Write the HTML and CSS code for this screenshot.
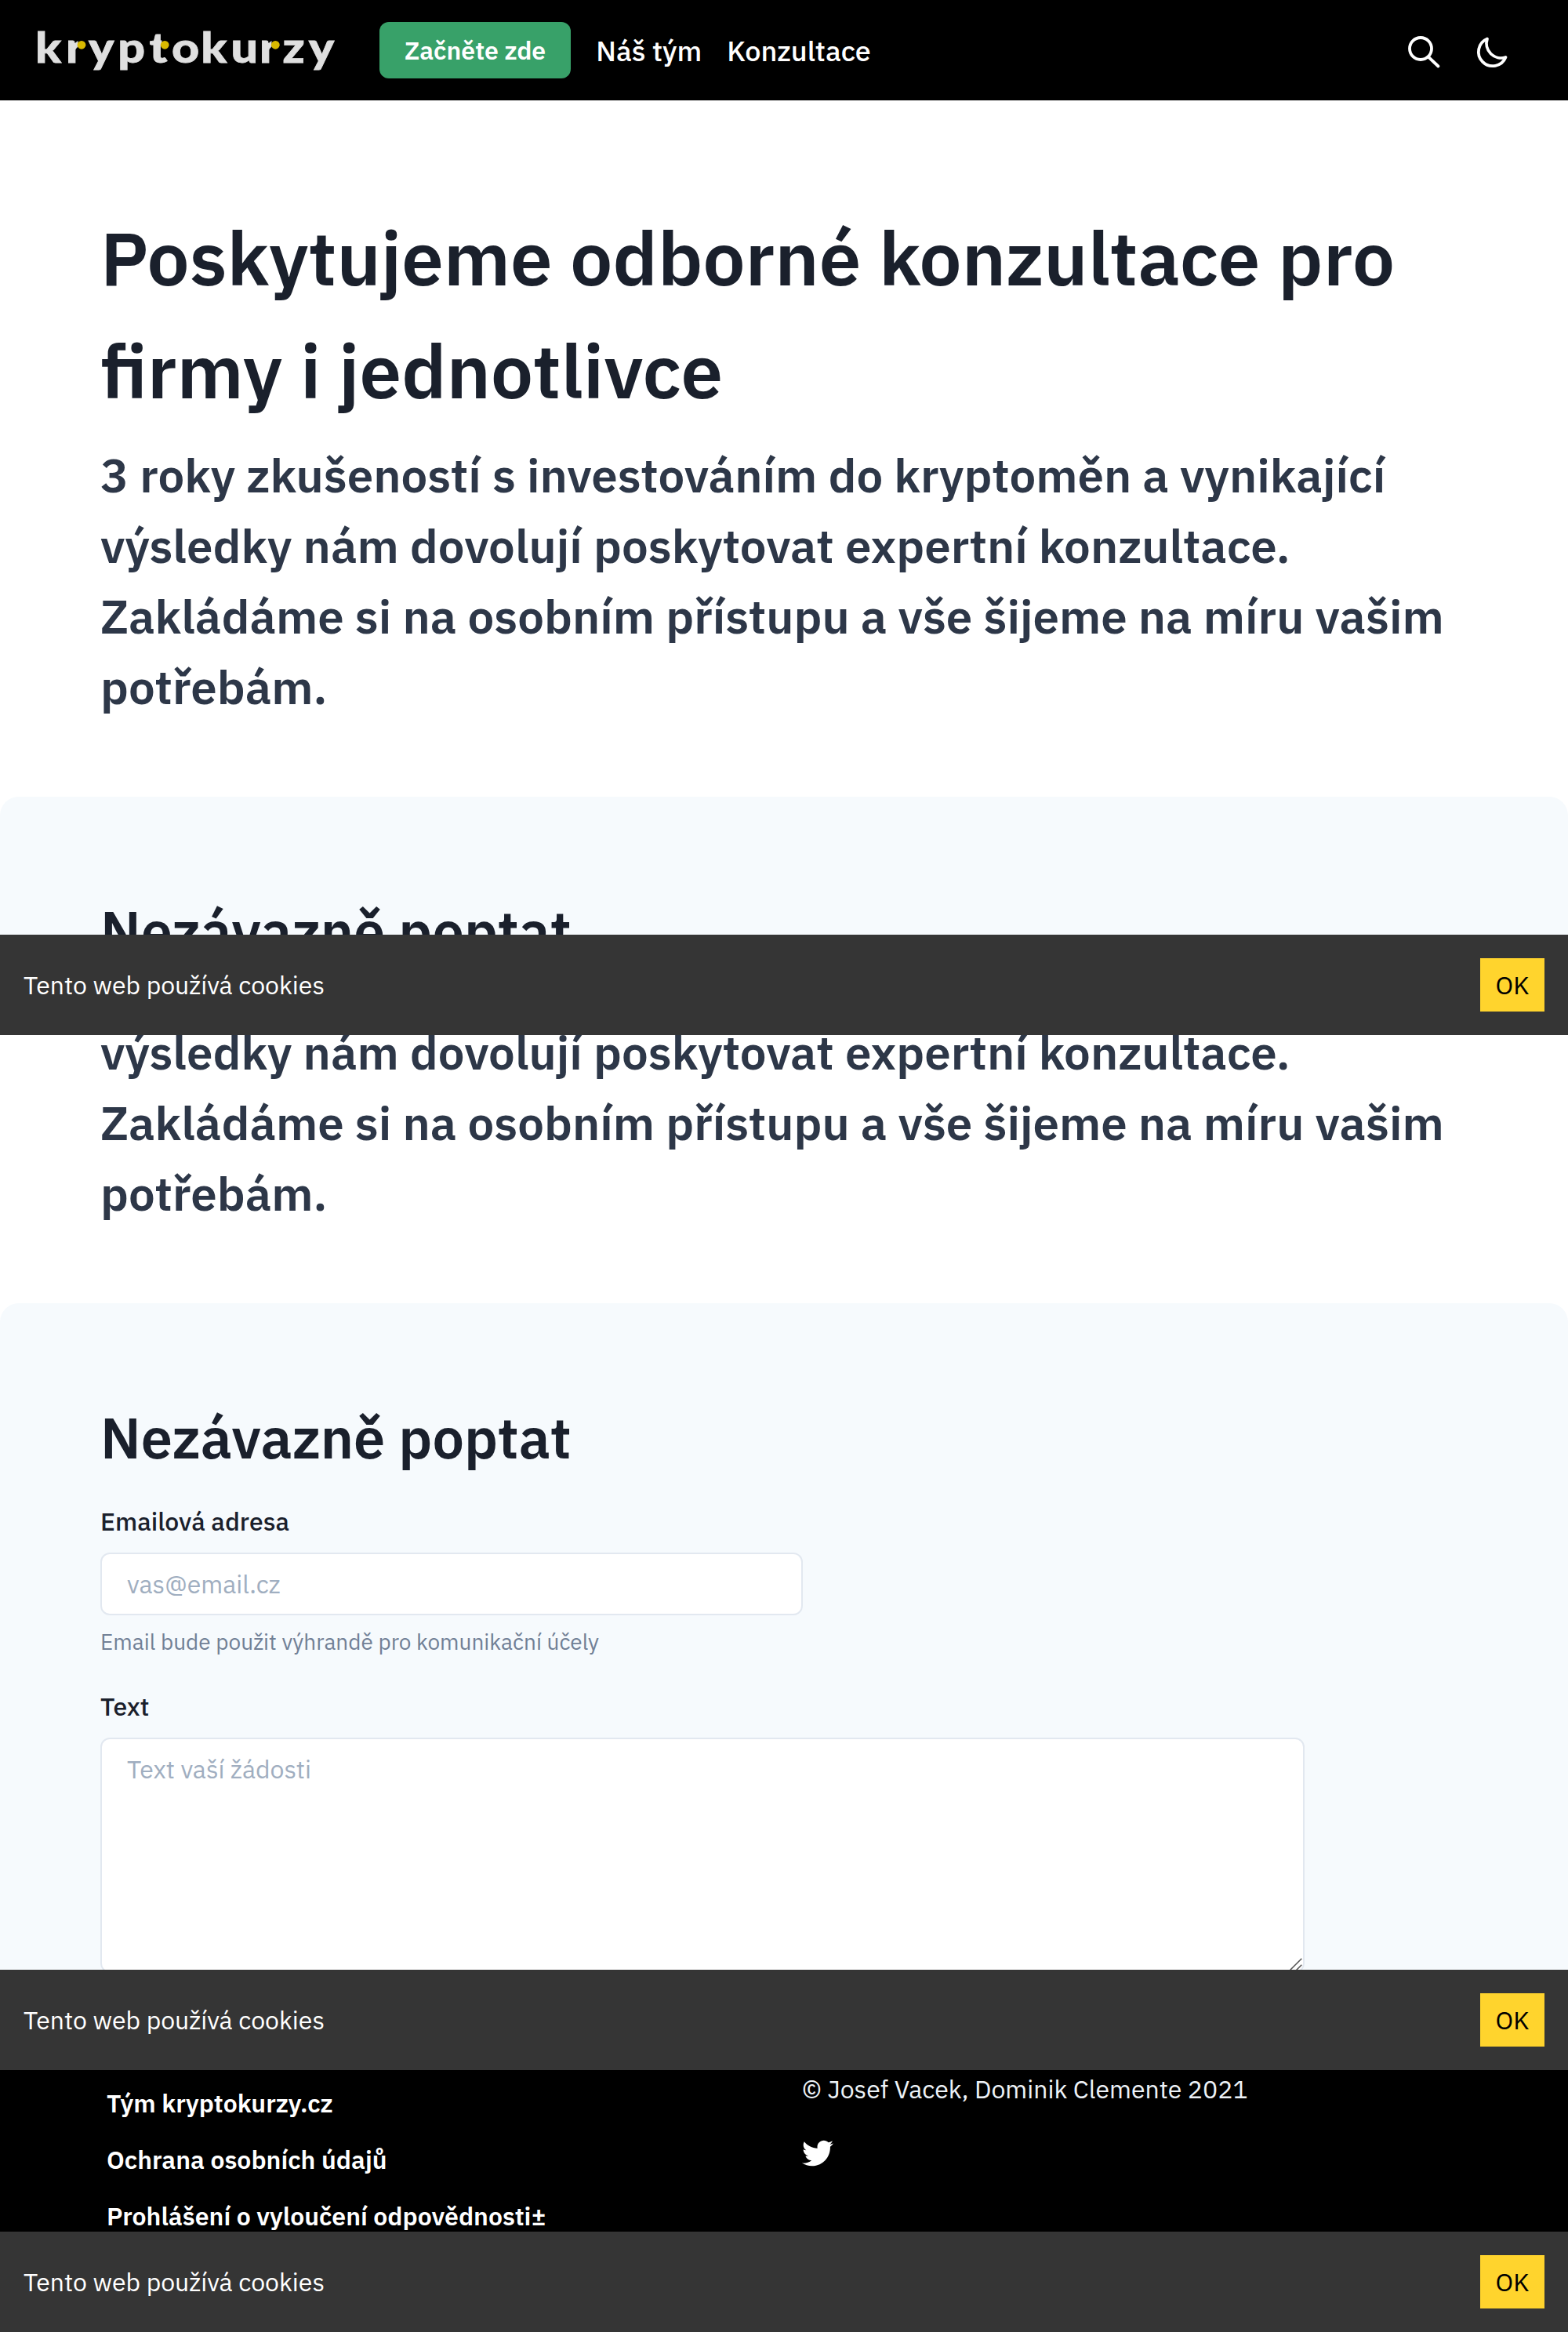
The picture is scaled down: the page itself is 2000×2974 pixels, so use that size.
FILE: index.html
```html
<!DOCTYPE html>
<html lang="cs">
<head>
<meta charset="utf-8">
<title>Konzultace | kryptokurzy</title>
<link rel="stylesheet" href="styles.css">
</head>
<body>
<div class="screen screen-first">
  <header class="navbar">
    <svg class="logo" width="390" height="72" viewBox="0 0 390 72" role="img" aria-label="kryptokurzy">
      <text class="logo-text" transform="scale(1.13 1)" y="51.5" x="2.7 37.2 62.8 95.8 131.4 156.6 189.6 223.5 255.8 281.9 311.2">kryptokurzy</text>
      <path class="logo-gap" d="M57.5 21h11.5v22h-11.5zM164.5 21h12v16h-12zM304.5 21h12.5v22h-12.5z"/>
      <g class="logo-dots">
        <circle cx="62" cy="29.3" r="5.4"/>
        <circle cx="168.2" cy="29.3" r="5.4"/>
        <circle cx="309.3" cy="29.3" r="5.4"/>
      </g>
    </svg>
    <a class="nav-button">Začněte zde</a>
    <nav class="nav-links"><a>Náš tým</a><a>Konzultace</a></nav>
    <div class="nav-icons">
      <svg width="44" height="44" viewBox="0 0 44 44"><circle cx="18" cy="18" r="14"/><path d="M28.2 28.8L40.5 40.5"/></svg>
      <svg width="44" height="44" viewBox="0 0 44 44"><path d="M17 5.5A18 18 0 1 0 40.5 29A18.6 18.6 0 0 1 17 5.5Z"/></svg>
    </div>
  </header>
  <section class="hero">
    <h1>Poskytujeme odborné konzultace pro firmy i jednotlivce</h1>
    <p>3 roky zkušeností s investováním do kryptoměn a vynikající výsledky nám dovolují poskytovat expertní konzultace. Zakládáme si na osobním přístupu a vše šijeme na míru vašim potřebám.</p>
  </section>
  <section class="inquiry"><h2>Nezávazně poptat</h2></section>
</div>
<div class="cookie-bar"><span>Tento web používá cookies</span><button>OK</button></div>

<div class="screen screen-second">
  <section class="hero hero-continued">
    <p>výsledky nám dovolují poskytovat expertní konzultace. Zakládáme si na osobním přístupu a vše šijeme na míru vašim potřebám.</p>
  </section>
  <section class="inquiry">
    <h2>Nezávazně poptat</h2>
    <form class="form">
      <div class="field">
        <label for="email">Emailová adresa</label>
        <input id="email" type="email" placeholder="vas@email.cz">
        <small>Email bude použit výhrandě pro komunikační účely</small>
      </div>
      <div class="field">
        <label for="message">Text</label>
        <div class="message-box">
          <textarea id="message" placeholder="Text vaší žádosti"></textarea>
          <svg class="grip" width="16" height="16" viewBox="0 0 16 16"><path d="M15.3.7L.7 15.3M15.3 8.7L8.7 15.3"/></svg>
        </div>
      </div>
    </form>
  </section>
</div>
<div class="cookie-bar"><span>Tento web používá cookies</span><button>OK</button></div>

<footer class="footer">
  <div class="footer-links"><a>Tým kryptokurzy.cz</a><a>Ochrana osobních údajů</a><a>Prohlášení o vyloučení odpovědnosti±</a></div>
  <div class="footer-info">
    <span>© Josef Vacek, Dominik Clemente 2021</span>
    <svg width="40" height="40" viewBox="0 0 512 512"><path d="M459.37 151.716c.325 4.548.325 9.097.325 13.645 0 138.72-105.583 298.558-298.558 298.558-59.452 0-114.68-17.219-161.137-47.106 8.447.974 16.568 1.299 25.34 1.299 49.055 0 94.213-16.568 130.274-44.832-46.132-.975-84.792-31.188-98.112-72.772 6.498.974 12.995 1.624 19.818 1.624 9.421 0 18.843-1.3 27.614-3.573-48.081-9.747-84.143-51.98-84.143-102.985v-1.299c13.969 7.797 30.214 12.67 47.431 13.319-28.264-18.843-46.781-51.005-46.781-87.391 0-19.492 5.197-37.36 14.294-52.954 51.655 63.675 129.3 105.258 216.365 109.807-1.624-7.797-2.599-15.918-2.599-24.04 0-57.828 46.782-104.934 104.934-104.934 30.213 0 57.502 12.67 76.67 33.137 23.715-4.548 46.456-13.32 66.599-25.34-7.798 24.366-24.366 44.833-46.132 57.827 21.117-2.273 41.584-8.122 60.426-16.243-14.292 20.791-32.161 39.308-52.628 54.253z"/></svg>
  </div>
</footer>
<div class="cookie-bar"><span>Tento web používá cookies</span><button>OK</button></div>
</body>
</html>
```
FILE: styles.css
```css
* { box-sizing: border-box; margin: 0; padding: 0; }
body, input, textarea, button { font-family: "IBM Plex Sans", Roboto, sans-serif; font-size: 32px; }
body { background: #fff; color: #1a202c; line-height: 48px; }

.screen { height: 1192px; overflow: hidden; }

.navbar { display: flex; align-items: center; height: 128px; padding: 0 76px 0 42px; background: #000; color: #fff; }
.logo { display: block; overflow: visible; }
.logo-text { font: 900 54px Lato, sans-serif; fill: #dfdfdf; stroke: #dfdfdf; stroke-width: 0.8; }
.logo-gap { fill: #000; }
.logo-dots { fill: #d9b900; }
.nav-button { height: 72px; margin-left: 52px; padding: 0 32px; border-radius: 12px; background: #38a169; font-weight: 600; line-height: 72px; }
.nav-links { display: flex; gap: 32px; margin-left: 32px; padding-top: 2px; font-size: 36px; font-weight: 500; line-height: 54px; }
.nav-icons { display: flex; gap: 42px; margin-left: auto; padding-top: 4px; }
.nav-icons svg { fill: none; stroke: #fff; stroke-width: 3.8; stroke-linecap: round; stroke-linejoin: round; }

.hero { padding: 128px 128px 95px; }
.hero h1 { margin-bottom: 17px; font-size: 96px; font-weight: 600; line-height: 144px; }
.hero p { color: #2d3748; font-size: 60px; font-weight: 600; line-height: 90px; }
.hero-continued { margin-top: -23px; padding-top: 0; }

.inquiry { height: 900px; padding: 128px; border-radius: 24px 24px 0 0; background: #f6fafd; }
.inquiry h2 { margin-bottom: 40px; font-size: 72px; font-weight: 600; line-height: 86px; }
.form { display: flex; flex-direction: column; gap: 40px; }
.field { display: flex; flex-direction: column; }
.field label { margin-bottom: 16px; font-weight: 500; }
.field small { margin-top: 16px; color: #718096; font-size: 28px; line-height: 36px; }
.field input, .field textarea { display: block; padding: 0 32px; border: 2px solid #e2e8f0; border-radius: 12px; background: #fff; }
.field input { width: 896px; height: 80px; }
.message-box { position: relative; width: 1536px; }
.field textarea { width: 100%; height: 300px; padding-top: 16px; line-height: 44px; resize: none; }
.field ::placeholder { color: #a0aec0; opacity: 1; }
.grip { position: absolute; right: 3px; bottom: 3px; fill: none; stroke: #555; stroke-width: 1.5; }

.cookie-bar { display: flex; align-items: center; justify-content: space-between; height: 128px; padding: 0 30px; background: #353535; color: #fff; }
.cookie-bar button { width: 82px; height: 68px; border: 0; background: #ffd42d; color: #000; line-height: 48px; }

.footer { display: flex; height: 206px; padding: 0 128px; overflow: hidden; background: #000; color: #fff; }
.footer-links { display: flex; flex-direction: column; gap: 24px; width: 895px; padding: 18px 8px 0; font-weight: 600; }
.footer-info { display: flex; flex-direction: column; gap: 38px; color: #edf2f7; }
.footer-info svg { fill: #fff; }
```
